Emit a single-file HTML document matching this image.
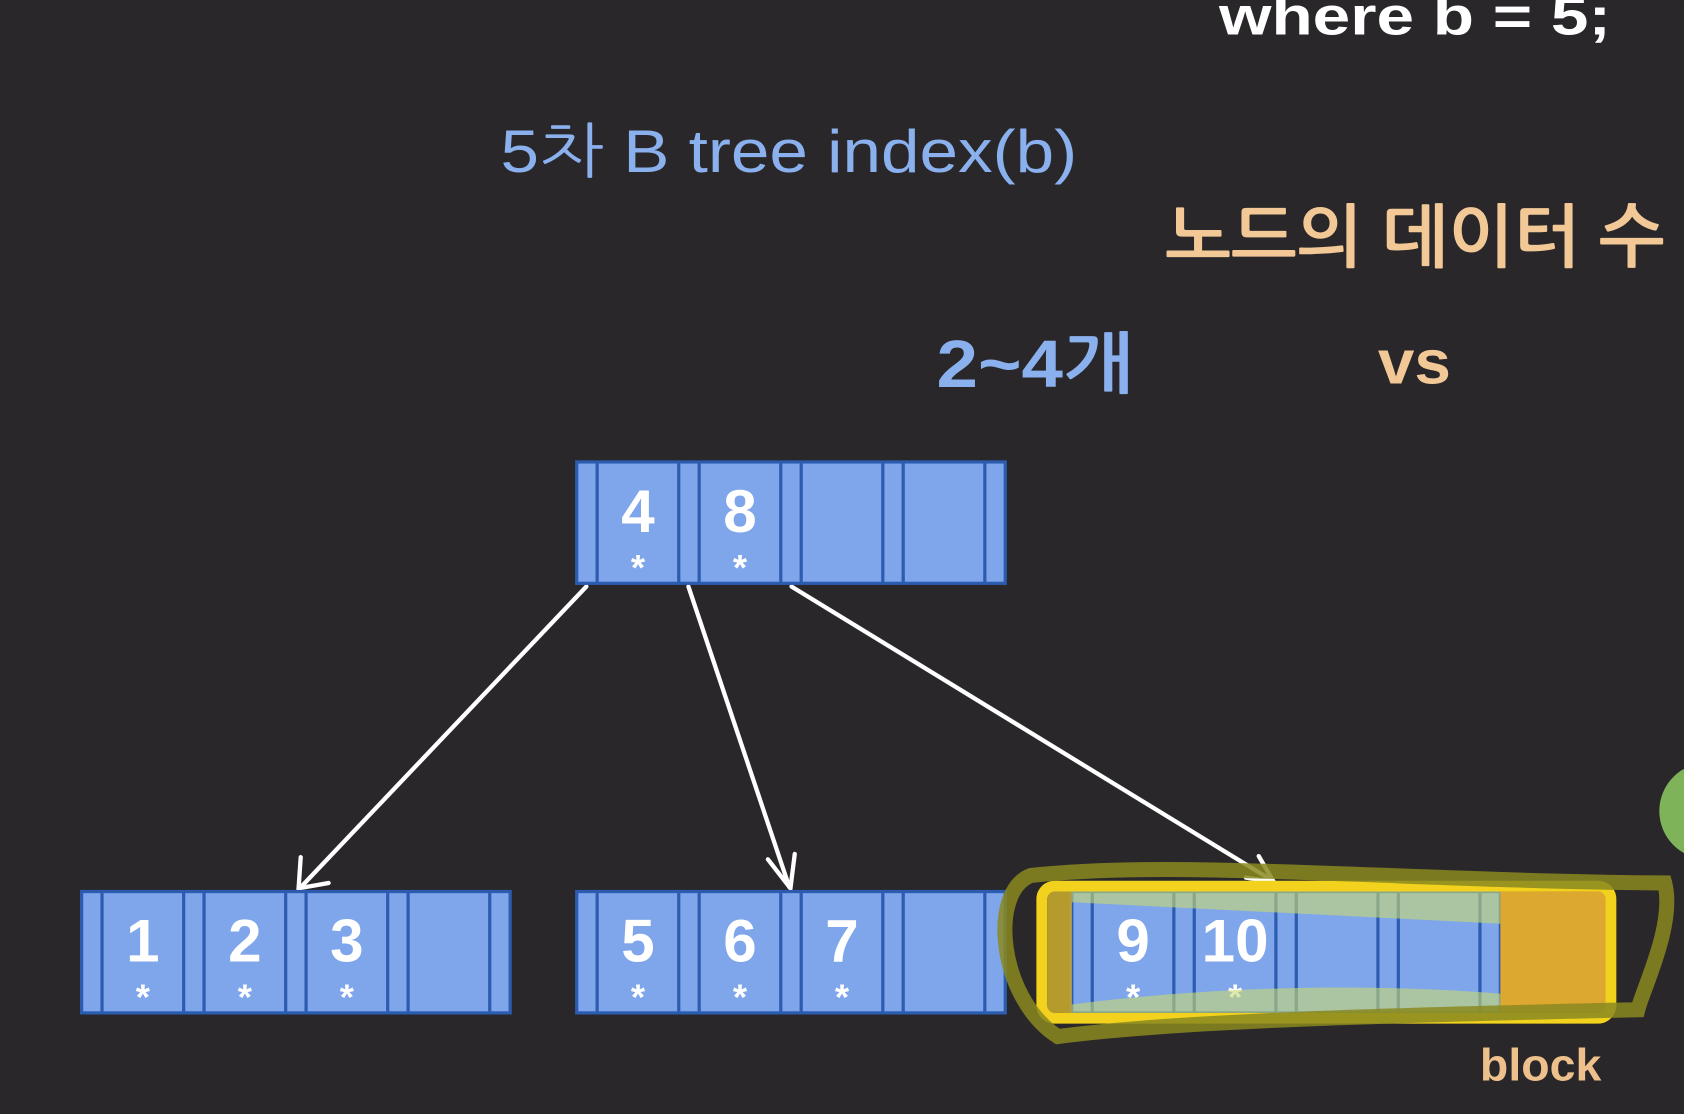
<!DOCTYPE html>
<html><head><meta charset="utf-8"><style>
html,body{margin:0;padding:0;background:#29272a;width:1684px;height:1114px;overflow:hidden}
svg{display:block}
text{font-family:"Liberation Sans","NanumGothic","Noto Sans CJK KR",sans-serif}
</style></head><body>
<svg width="1684" height="1114" viewBox="0 0 1568 1037" xmlns="http://www.w3.org/2000/svg">
<rect width="1568" height="1037" fill="#29272a"/>
<text x="1135" y="32" font-size="50" fill="#fff" font-weight="bold" textLength="365" lengthAdjust="spacingAndGlyphs">where b = 5;</text>
<text x="466" y="160" font-size="56" fill="#8ab0ee" textLength="537" lengthAdjust="spacingAndGlyphs">5차 B tree index(b)</text>
<text x="1085" y="243" font-size="64" fill="#f2c896" font-weight="bold" textLength="465" lengthAdjust="spacingAndGlyphs">노드의 데이터 수</text>
<text x="872" y="360" font-size="62" fill="#8ab0ee" font-weight="bold" textLength="183" lengthAdjust="spacingAndGlyphs">2~4개</text>
<text x="1283" y="357" font-size="58" fill="#f2c896" font-weight="bold" textLength="68" lengthAdjust="spacingAndGlyphs">vs</text>
<circle cx="1590" cy="755" r="45" fill="#7fb35a"/>
<defs>
<g id="node">
<rect x="0" y="0" width="399" height="113" fill="#7fa6ea" stroke="#2c5cb0" stroke-width="3"/>
<g stroke="#2c5cb0" stroke-width="3">
<line x1="19" y1="0" x2="19" y2="113"/><line x1="95" y1="0" x2="95" y2="113"/>
<line x1="114" y1="0" x2="114" y2="113"/><line x1="190" y1="0" x2="190" y2="113"/>
<line x1="209" y1="0" x2="209" y2="113"/><line x1="285" y1="0" x2="285" y2="113"/>
<line x1="304" y1="0" x2="304" y2="113"/><line x1="380" y1="0" x2="380" y2="113"/>
</g>
</g>
</defs>
<g stroke="#fff" stroke-width="4" fill="none" stroke-linecap="round">
<line x1="546" y1="546" x2="280" y2="826"/><path d="M280,798 L278,827 L306,822"/>
<line x1="641" y1="546" x2="735" y2="826"/><path d="M715,800 L736,827 L740,795"/>
<line x1="737" y1="546" x2="1185" y2="820"/><path d="M1160,817 L1186,821 L1172,797"/>
</g>
<g font-size="56" fill="#fff" text-anchor="middle" font-weight="bold">
<use href="#node" x="537" y="430"/>
<text x="594" y="495">4</text><text x="689" y="495">8</text>
<use href="#node" x="76" y="830"/>
<text x="133" y="895">1</text><text x="228" y="895">2</text><text x="323" y="895">3</text>
<use href="#node" x="537" y="830"/>
<text x="594" y="895">5</text><text x="689" y="895">6</text><text x="784" y="895">7</text>
<use href="#node" x="998" y="830"/>
<text x="1055" y="895">9</text><text x="1150" y="895">10</text>
</g>
<g font-size="34" fill="#fff" text-anchor="middle" font-weight="bold">
<text x="594" y="540">*</text><text x="689" y="540">*</text>
<text x="133" y="940">*</text><text x="228" y="940">*</text><text x="323" y="940">*</text>
<text x="594" y="940">*</text><text x="689" y="940">*</text><text x="784" y="940">*</text>
<text x="1055" y="940">*</text><text x="1150" y="940">*</text>
</g>
<rect x="1397" y="830" width="104" height="113" fill="#dca830"/>
<rect x="975" y="830" width="23" height="113" fill="#d8b830" opacity="0.8"/>
<path d="M998,840 Q1200,850 1397,860 L1397,830 L998,830Z" fill="#c8d870" opacity="0.6"/>
<path d="M998,935 Q1200,910 1397,925 L1397,943 L998,943Z" fill="#c8d870" opacity="0.6"/>
<rect x="970" y="825" width="530" height="123" rx="12" fill="none" stroke="#f2d21c" stroke-width="10"/>
<path d="M985,965 C930,930 920,830 960,815 C1100,800 1300,820 1550,822 C1560,860 1530,920 1525,940 C1300,945 1100,950 985,965Z" fill="none" stroke="#8a8a20" stroke-width="14" opacity="0.85"/>
<text x="1378" y="1006" font-size="42" fill="#eec08c" font-weight="bold" textLength="113" lengthAdjust="spacingAndGlyphs">block</text>
</svg>
</body></html>
